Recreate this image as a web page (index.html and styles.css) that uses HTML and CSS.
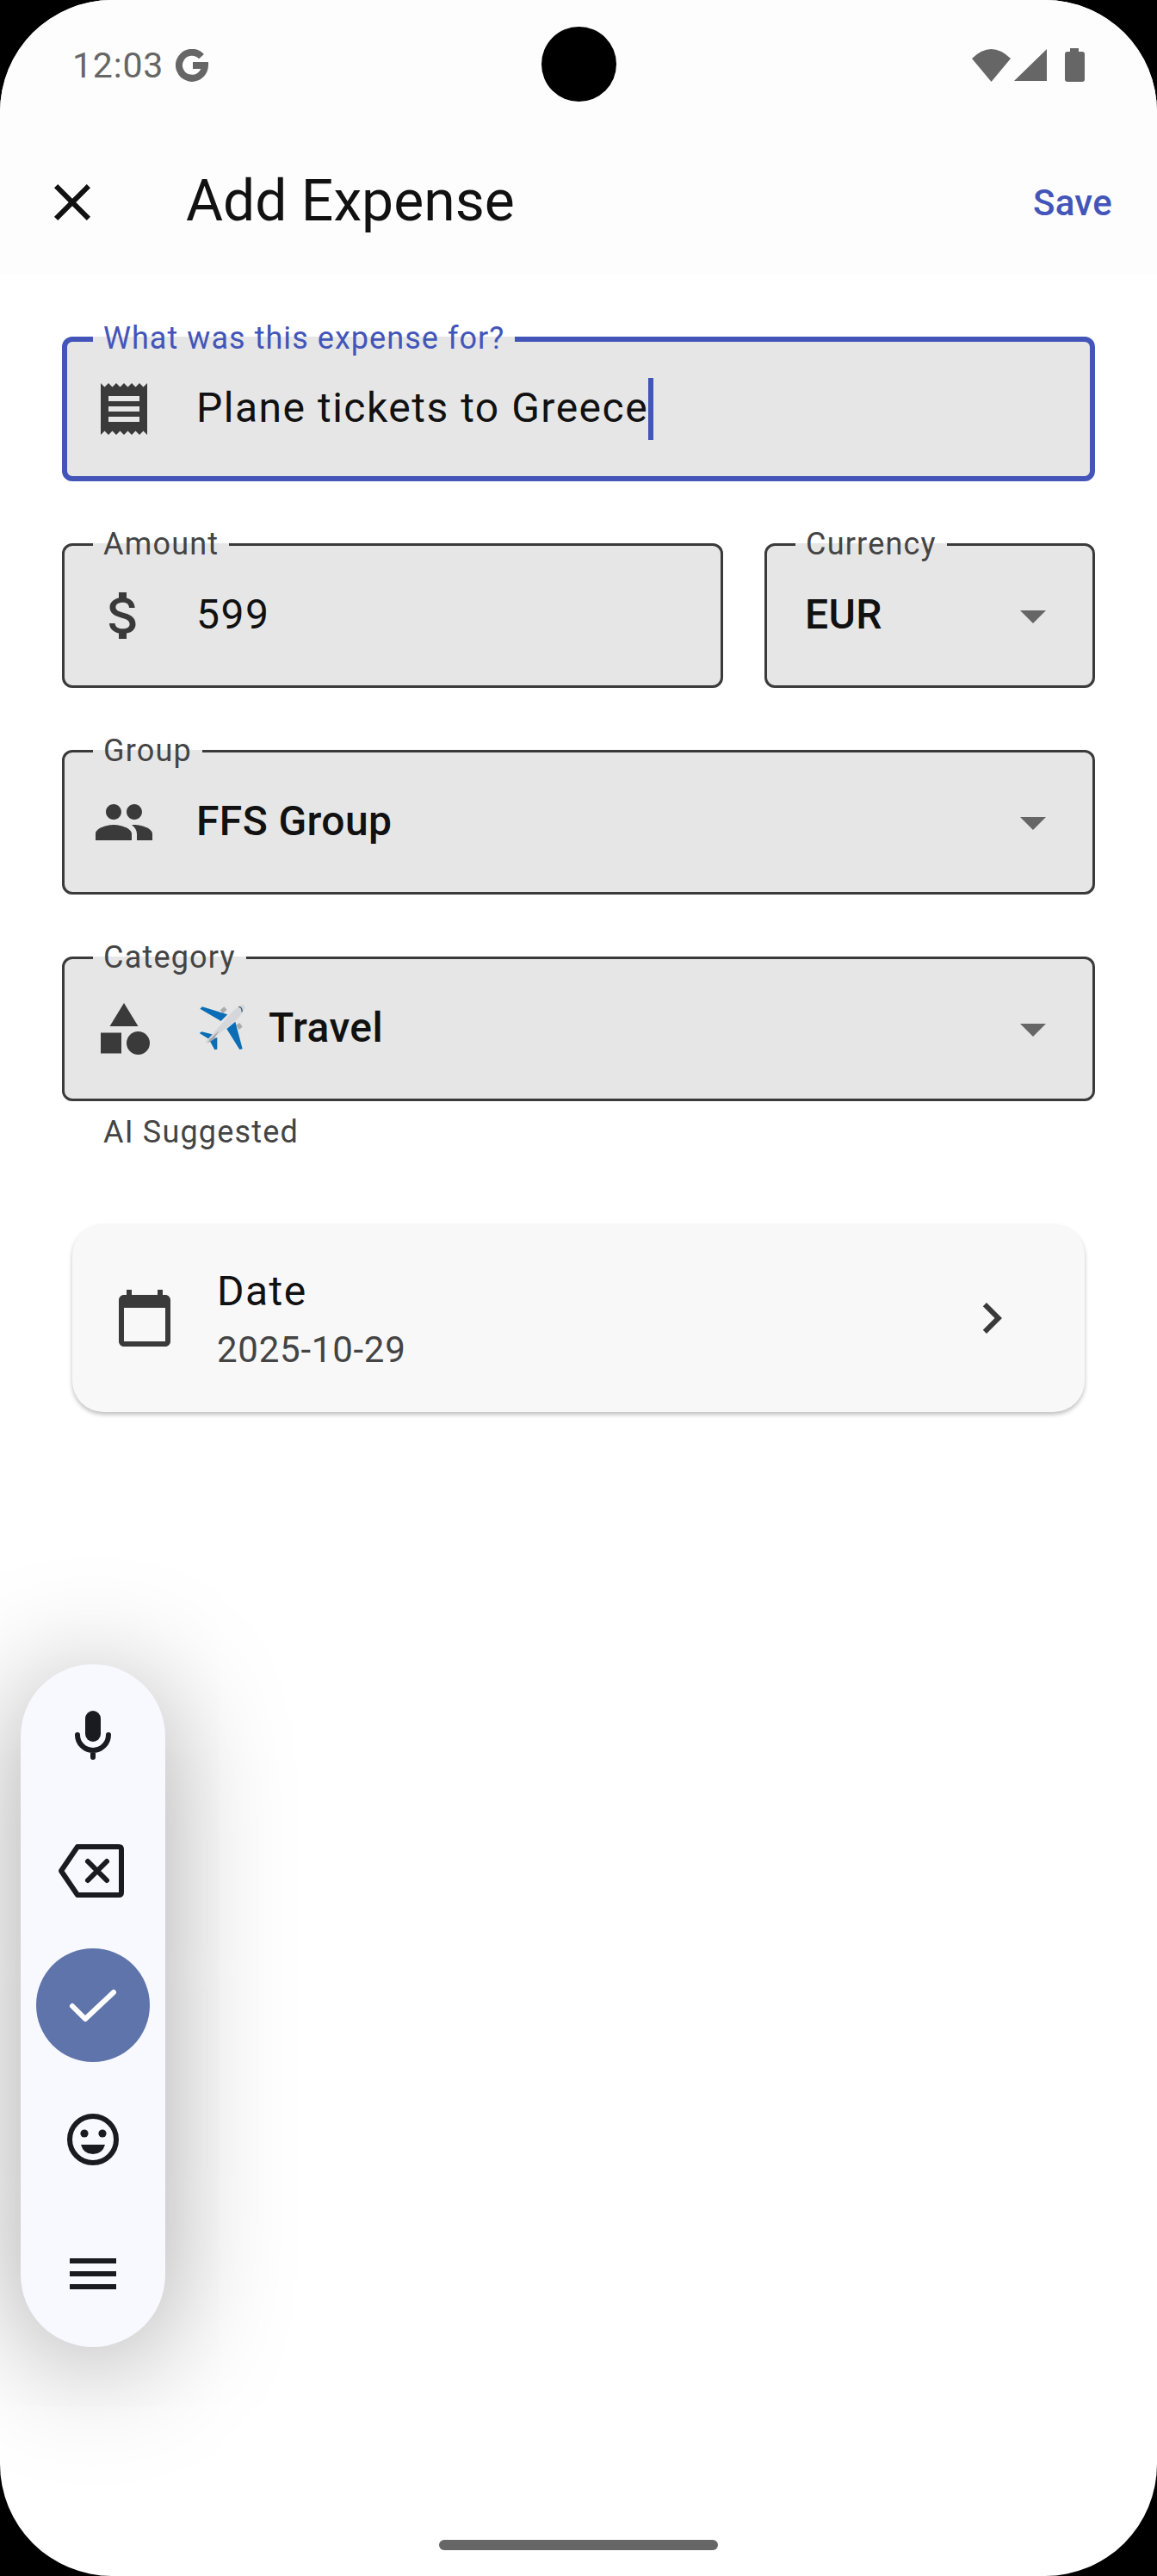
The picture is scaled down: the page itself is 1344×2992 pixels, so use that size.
FILE: index.html

```html
<!DOCTYPE html>
<html lang="en">
<head>
  <meta charset="UTF-8">
  <meta name="viewport" content="width=device-width, initial-scale=1.0">
  <title>Add Expense</title>
  <link rel="stylesheet" href="styles.css">
</head>
<body>
  <div class="screen">
    <div class="camera"></div>

    <header class="top">
      <div class="status">
        <span class="clock">12:03</span>
        <svg class="g-logo" viewBox="0 0 38 38"><path d="M30 8.6A15 15 0 1 0 34 19H20" fill="none" stroke="#666" stroke-width="8"/></svg>
        <div class="status-icons">
          <svg class="wifi" viewBox="0 0 45 38"><path d="M0 11Q22.5-11 45 11L22.5 38z" fill="#666"/></svg>
          <svg class="signal" viewBox="0 0 38 37"><path d="M38 0V37H0z" fill="#666"/></svg>
          <svg class="battery" viewBox="0 0 23 39"><path d="M6 0H16V4H20Q23 4 23 7V36Q23 39 20 39H3Q0 39 0 36V7Q0 4 3 4H6z" fill="#666"/></svg>
        </div>
      </div>
      <div class="toolbar">
        <svg class="icon close" viewBox="0 0 24 24"><path d="M19 6.41L17.59 5 12 10.59 6.41 5 5 6.41 10.59 12 5 17.59 6.41 19 12 13.41 17.59 19 19 17.59 13.41 12z"/></svg>
        <h1>Add Expense</h1>
        <span class="save">Save</span>
      </div>
    </header>

    <main class="form">
      <fieldset class="field focused">
        <legend>What was this expense for?</legend>
        <div class="row">
          <svg class="icon" viewBox="0 0 24 24"><path d="M18 17H6v-2h12v2zm0-4H6v-2h12v2zm0-4H6V7h12v2zM3 22l1.5-1.5L6 22l1.5-1.5L9 22l1.5-1.5L12 22l1.5-1.5L15 22l1.5-1.5L18 22l1.5-1.5L21 22V2l-1.5 1.5L18 2l-1.5 1.5L15 2l-1.5 1.5L12 2l-1.5 1.5L9 2 7.5 3.5 6 2 4.5 3.5 3 2v20z"/></svg>
          <span class="value">Plane tickets to Greece</span><span class="cursor"></span>
        </div>
      </fieldset>

      <div class="pair">
        <fieldset class="field">
          <legend>Amount</legend>
          <div class="row">
            <svg class="icon" viewBox="0 0 24 24"><path d="M11.8 10.9c-2.27-.59-3-1.2-3-2.15 0-1.09 1.01-1.85 2.7-1.85 1.78 0 2.44.85 2.5 2.1h2.21c-.07-1.72-1.12-3.3-3.21-3.81V3h-3v2.16c-1.94.42-3.5 1.68-3.5 3.61 0 2.31 1.91 3.46 4.7 4.13 2.5.6 3 1.48 3 2.41 0 .69-.49 1.79-2.7 1.79-2.06 0-2.87-.92-2.98-2.1h-2.2c.12 2.19 1.76 3.42 3.68 3.83V21h3v-2.15c1.95-.37 3.5-1.5 3.5-3.55 0-2.84-2.43-3.81-4.7-4.4z"/></svg>
            <span class="value">599</span>
          </div>
        </fieldset>
        <fieldset class="field">
          <legend>Currency</legend>
          <div class="row no-icon">
            <span class="value strong">EUR</span>
            <svg class="icon arrow" viewBox="0 0 24 24"><path d="M7 10l5 5 5-5z"/></svg>
          </div>
        </fieldset>
      </div>

      <fieldset class="field">
        <legend>Group</legend>
        <div class="row">
          <svg class="icon" viewBox="0 0 24 24"><path d="M16 11c1.66 0 2.99-1.34 2.99-3S17.66 5 16 5c-1.66 0-3 1.34-3 3s1.34 3 3 3zm-8 0c1.66 0 2.99-1.34 2.99-3S9.66 5 8 5C6.34 5 5 6.34 5 8s1.34 3 3 3zm0 2c-2.33 0-7 1.17-7 3.5V19h14v-2.5c0-2.33-4.67-3.5-7-3.5zm8 0c-.29 0-.62.02-.97.05 1.16.84 1.97 1.97 1.97 3.45V19h6v-2.5c0-2.33-4.67-3.5-7-3.5z"/></svg>
          <span class="value strong">FFS Group</span>
          <svg class="icon arrow" viewBox="0 0 24 24"><path d="M7 10l5 5 5-5z"/></svg>
        </div>
      </fieldset>

      <div class="with-helper">
        <fieldset class="field">
          <legend>Category</legend>
          <div class="row">
            <svg class="icon" viewBox="0 0 24 24"><path d="M12 2l-5.5 9h11z"/><circle cx="17.5" cy="17.5" r="4.5"/><path d="M3 13.5h8v8H3z"/></svg>
            <svg class="plane" viewBox="0 0 270 270">
              <path d="M122 70L136 58 146 68 132 82z" fill="#a9abad"/>
              <path d="M178 122L190 114 200 128 188 138z" fill="#a9abad"/>
              <path d="M52 65L60 58 148 85 125 108z" fill="#0a6db5"/>
              <path d="M200 205L190 207 145 135 175 110z" fill="#0a6db5"/>
              <path d="M50 150L58 145 100 155 85 172z" fill="#0a6db5"/>
              <path d="M112 206L103 208 85 175 112 165z" fill="#0a6db5"/>
              <path d="M72 182Q72 178 76 175L150 92Q175 62 195 52 208 48 208 60 205 78 178 105L95 170Q85 180 78 187z" fill="#d6d7da"/>
              <path d="M85 172L118 142 100 172 80 184z" fill="#a5a6a8"/>
              <path d="M187 58Q200 60 198 76" fill="none" stroke="#3f5d78" stroke-width="4"/>
            </svg>
            <span class="value strong">Travel</span>
            <svg class="icon arrow" viewBox="0 0 24 24"><path d="M7 10l5 5 5-5z"/></svg>
          </div>
        </fieldset>
        <p class="helper">AI Suggested</p>
      </div>

      <section class="date-card">
        <svg class="icon" viewBox="0 0 24 24"><path d="M20 3h-1V1h-2v2H7V1H5v2H4c-1.1 0-2 .9-2 2v16c0 1.1.9 2 2 2h16c1.1 0 2-.9 2-2V5c0-1.1-.9-2-2-2zm0 18H4V8h16v13z"/></svg>
        <div class="date-text">
          <div class="date-title">Date</div>
          <div class="date-value">2025-10-29</div>
        </div>
        <svg class="icon chevron" viewBox="0 0 24 24"><path d="M10 6L8.59 7.41 13.17 12l-4.58 4.59L10 18l6-6z"/></svg>
      </section>
    </main>

    <nav class="bubble">
      <div class="bubble-item">
        <svg class="tool" viewBox="0 0 84 84"><rect x="33" y="12" width="18" height="36" rx="9" fill="#1a1b20"/><path d="M24 40a18 18 0 0 0 36 0M42 59V66" fill="none" stroke="#1a1b20" stroke-width="6" stroke-linecap="round"/></svg>
      </div>
      <div class="bubble-item">
        <svg class="tool" viewBox="0 0 84 84"><path d="M24 14H72Q75 14 75 17V67Q75 70 72 70H24L5 42z" fill="none" stroke="#1a1b20" stroke-width="6" stroke-linejoin="round"/><path d="M36 31L58 53M58 31L36 53" fill="none" stroke="#1a1b20" stroke-width="6" stroke-linecap="round"/></svg>
      </div>
      <div class="bubble-item">
        <div class="confirm">
          <svg class="tool" viewBox="0 0 84 84"><path d="M18 43L33 58L66 27" fill="none" stroke="#fff" stroke-width="6" stroke-linecap="round" stroke-linejoin="round"/></svg>
        </div>
      </div>
      <div class="bubble-item">
        <svg class="tool" viewBox="0 0 84 84"><circle cx="42" cy="42" r="27" fill="none" stroke="#1a1b20" stroke-width="6"/><circle cx="32" cy="35" r="4.6" fill="#1a1b20"/><circle cx="53" cy="35" r="4.6" fill="#1a1b20"/><path d="M28 48H56Q53 59 42 59T28 48z" fill="#1a1b20"/></svg>
      </div>
      <div class="bubble-item">
        <div class="menu"><span></span><span></span><span></span></div>
      </div>
    </nav>

    <div class="home-bar"></div>
  </div>
</body>
</html>
```

FILE: styles.css

```css
* {
  box-sizing: border-box;
}
html, body {
  margin: 0;
  background-color: #000;
}
body {
  width: 1344px;
  height: 2992px;
  font-family: Roboto, "Liberation Sans", sans-serif;
  color: #111;
}
.screen {
  position: relative;
  width: 1344px;
  height: 2992px;
  border-radius: 130px;
  overflow: hidden;
  background-color: #fff;
}
.camera {
  position: absolute;
  left: 629px;
  top: 31px;
  width: 87px;
  height: 87px;
  border-radius: 50%;
  background-color: #000;
}

.top {
  height: 319px;
  background-color: #fdfdfd;
}
.status {
  display: flex;
  align-items: center;
  height: 151px;
  padding: 0 84px 0 84px;
  color: #666;
}
.clock {
  font-size: 41px;
  letter-spacing: 0.8px;
}
.g-logo {
  width: 38px;
  height: 38px;
  margin-left: 14px;
}
.status-icons {
  display: flex;
  align-items: center;
  margin-left: auto;
}
.wifi {
  width: 45px;
  height: 38px;
}
.signal {
  width: 38px;
  height: 37px;
  margin-left: 4px;
}
.battery {
  width: 23px;
  height: 39px;
  margin-left: 21px;
}
.toolbar {
  display: flex;
  align-items: center;
  height: 168px;
  padding: 0 52px 0 48px;
}
.toolbar h1 {
  margin: 0 0 4px 96px;
  font-size: 66px;
  font-weight: 400;
}
.save {
  margin-left: auto;
  font-size: 42px;
  font-weight: 500;
  letter-spacing: 0.3px;
  color: #4355b9;
}
.icon {
  flex: none;
  width: 72px;
  height: 72px;
  fill: #3a3a3a;
}
.close {
  fill: #111;
}

.form {
  display: flex;
  flex-direction: column;
  gap: 55px;
  padding: 55px 72px;
}
.pair {
  display: grid;
  grid-template-columns: 2fr 1fr;
  gap: 48px;
}
.field {
  height: 185px;
  min-width: 0;
  margin: 0;
  padding: 0;
  border: 3px solid #3a3a3a;
  border-radius: 12px;
  background-color: #e6e6e6;
}
.field legend {
  margin-left: 33px;
  padding: 0 12px;
  font-size: 36px;
  line-height: 37px;
  letter-spacing: 1.2px;
  color: #444;
}
.field.focused {
  border: 6px solid #4355b9;
}
.field.focused legend {
  margin-left: 30px;
  padding-top: 1px;
  padding-bottom: 2px;
  letter-spacing: 1.05px;
  color: #4355b9;
}
.row {
  display: flex;
  align-items: center;
  height: 120px;
  margin-top: 4px;
  padding: 0 33px;
}
.focused .row {
  margin-top: 1px;
  padding: 0 30px;
}
.no-icon {
  padding-left: 44px;
}
.value {
  margin-left: 48px;
  padding-bottom: 4px;
  font-size: 48px;
  letter-spacing: 1.5px;
  color: #111;
}
.no-icon .value {
  margin-left: 0;
}
.strong {
  font-weight: 500;
  letter-spacing: 0.4px;
}
.cursor {
  width: 6px;
  height: 72px;
  background-color: #4355b9;
}
.arrow {
  margin-left: auto;
  fill: #666;
}
.plane {
  flex: none;
  width: 90px;
  height: 90px;
  margin-left: 35px;
}
.plane + .value {
  margin-left: 7px;
}
.helper {
  margin: 15px 0 0;
  padding-left: 48px;
  font-size: 36px;
  line-height: 42px;
  letter-spacing: 1.2px;
  color: #444;
}

.date-card {
  display: flex;
  align-items: center;
  height: 218px;
  margin: 31px 12px 0;
  padding: 0 72px 0 48px;
  border-radius: 36px;
  background-color: #f8f8f8;
  box-shadow: 0 3px 5px rgba(0,0,0,0.25);
}
.date-text {
  margin-left: 48px;
  padding-top: 4px;
}
.date-title {
  font-size: 48px;
  line-height: 64px;
  letter-spacing: 1.5px;
}
.date-value {
  margin-top: 6px;
  font-size: 42px;
  line-height: 60px;
  letter-spacing: 0.75px;
  color: #444;
}
.chevron {
  margin-left: auto;
}

.bubble {
  position: absolute;
  left: 24px;
  top: 1933px;
  display: flex;
  flex-direction: column;
  width: 168px;
  height: 793px;
  padding: 6px 0 7px;
  border-radius: 84px;
  background-color: #f8f8ff;
  box-shadow: 0 18px 140px rgba(0,0,0,0.35);
}
.bubble-item {
  display: flex;
  align-items: center;
  justify-content: center;
  height: 156px;
}
.tool {
  width: 84px;
  height: 84px;
}
.confirm {
  display: flex;
  align-items: center;
  justify-content: center;
  width: 132px;
  height: 132px;
  border-radius: 50%;
  background-color: #5e74aa;
}
.menu {
  display: flex;
  flex-direction: column;
  gap: 9px;
}
.menu span {
  display: block;
  width: 54px;
  height: 6px;
  background-color: #1a1b20;
}
.home-bar {
  position: absolute;
  left: 510px;
  bottom: 30px;
  width: 324px;
  height: 12px;
  border-radius: 6px;
  background-color: #666;
}
```
